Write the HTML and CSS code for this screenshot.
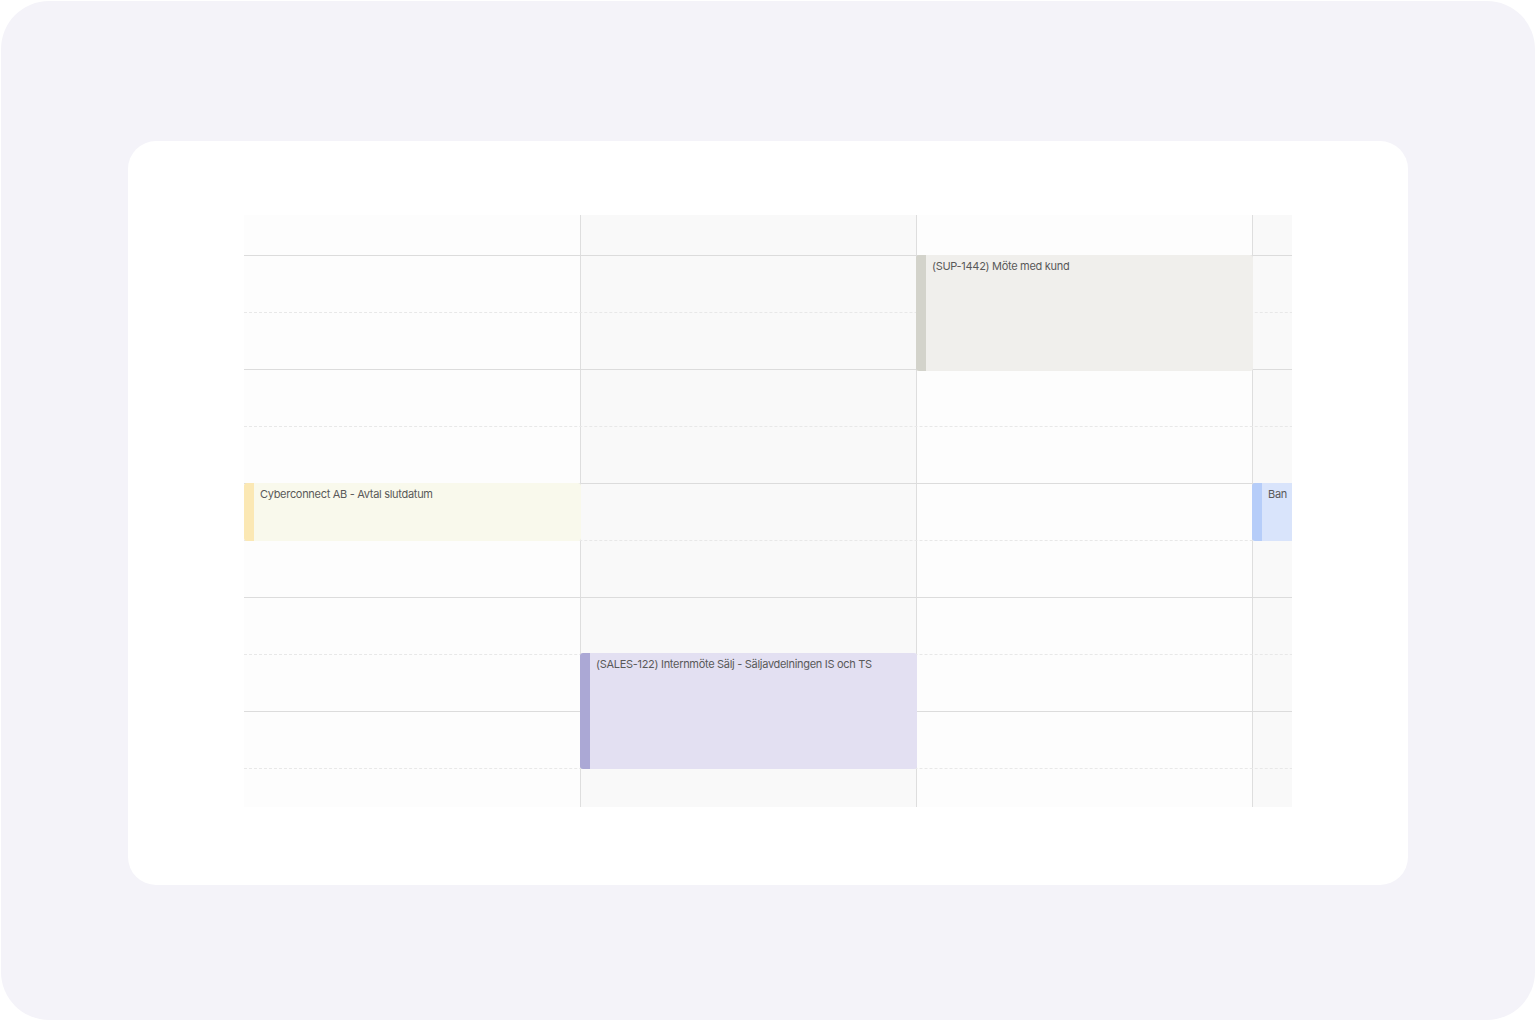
FILE: index.html
```html
<!DOCTYPE html>
<html lang="sv">
  <head>
    <meta charset="UTF-8" />
    <meta name="viewport" content="width=device-width, initial-scale=1.0" />
    <title>Kalender - vecka</title>
    <link rel="stylesheet" href="styles.css">
  </head>
  <body>
    <div class="frame">
      <div class="card">
        <div class="week">
          <!-- day backgrounds + column dividers -->
          <div class="days shades">
            <div class="day day-light"></div>
            <div class="day day-grey"></div>
            <div class="day day-light"></div>
            <div class="day day-grey"></div>
          </div>

          <!-- hour / half hour lines -->
          <div class="lines">
            <div class="slot slot-first"></div>
            <div class="slot hour"></div>
            <div class="slot half"></div>
            <div class="slot hour"></div>
            <div class="slot half"></div>
            <div class="slot hour"></div>
            <div class="slot half"></div>
            <div class="slot hour"></div>
            <div class="slot half"></div>
            <div class="slot hour"></div>
            <div class="slot half"></div>
          </div>

          <!-- events, top/height from start time and duration -->
          <div class="days events">
            <div class="day-col">
              <div class="event event-yellow" style="top: 268px; height: 58px;">
                Cyberconnect AB - Avtal slutdatum
              </div>
            </div>
            <div class="day-col">
              <div class="event event-purple" style="top: 438px; height: 116px;">
                (SALES-122) Internmöte Sälj - Säljavdelningen IS och TS
              </div>
            </div>
            <div class="day-col">
              <div class="event event-stone" style="top: 40px; height: 116px;">
                (SUP-1442) Möte med kund
              </div>
            </div>
            <div class="day-col">
              <div class="event event-blue" style="top: 268px; height: 58px;">
                Ban
              </div>
            </div>
          </div>
        </div>
      </div>
    </div>
  </body>
</html>
```

FILE: styles.css
```css
* {
  box-sizing: border-box;
}

body {
  margin: 0;
  background: #ffffff;
  font-family: Inter, "Noto Sans", sans-serif;
}

.frame {
  width: 1534px;
  height: 1019px;
  margin: 1px;
  padding: 140px 127px;
  border-radius: 48px;
  background: #f4f3f9;
}

.card {
  width: 1280px;
  height: 744px;
  padding: 74px 116px 0;
  border-radius: 28px;
  background: #ffffff;
}

.week {
  display: grid;
  width: 1048px;
  height: 592px;
  overflow: hidden;
}

.week > * {
  grid-area: 1 / 1;
}

.days {
  display: grid;
  grid-template-columns: repeat(4, 336px);
}

.day {
  height: 100%;
}

.day + .day {
  border-left: 1px solid #dedede;
}

.day-light {
  background: #fdfdfd;
}

.day-grey {
  background: #f9f9f9;
}

.lines {
  display: flex;
  flex-direction: column;
}

.slot {
  flex: none;
  height: 57px;
}

.slot-first {
  height: 40px;
}

.hour {
  border-top: 1px solid #dcdcdc;
}

.half {
  border-top: 1px dashed #e8e8e8;
}

.day-col {
  position: relative;
}

.event {
  position: absolute;
  left: 0;
  right: -1px;
  padding: 4px 8px 0 6px;
  border-left: 10px solid;
  border-radius: 3px;
  font-size: 11px;
  line-height: 14px;
  letter-spacing: -0.3px;
  color: #595959;
  white-space: nowrap;
  overflow: hidden;
}

.event-yellow {
  background: #f9f9ec;
  border-left-color: #fbe8b4;
}

.event-purple {
  background: #e3e0f2;
  border-left-color: #aba8d5;
}

.event-stone {
  background: #f0efec;
  border-left-color: #d3d3cb;
}

.event-blue {
  background: #d9e4fb;
  border-left-color: #b6cdf9;
}
```
